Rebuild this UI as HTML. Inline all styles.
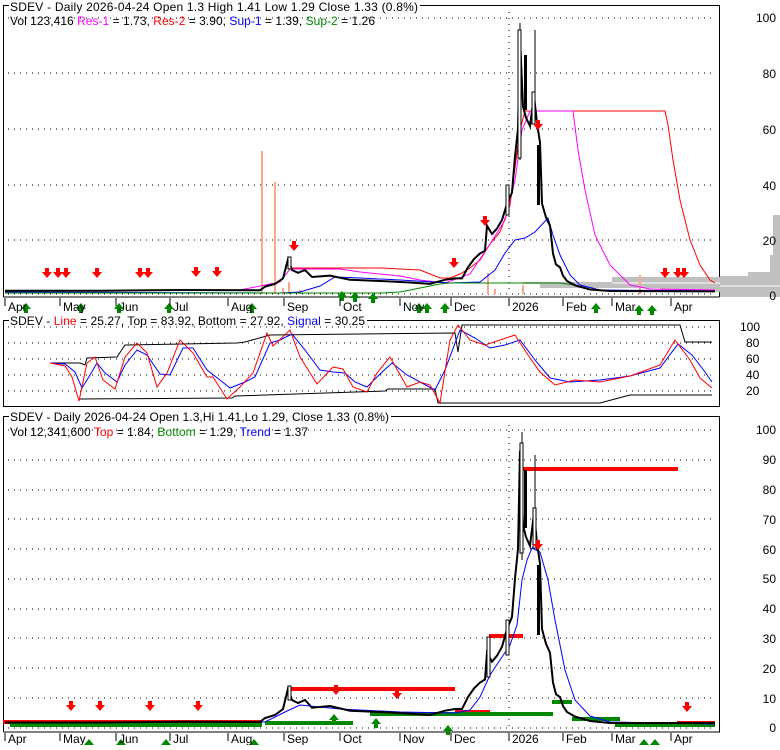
<!DOCTYPE html>
<html><head><meta charset="utf-8"><style>
body{margin:0;background:#fff;width:780px;height:745px;overflow:hidden}
svg text{font-family:"Liberation Sans",sans-serif;font-size:12px}
</style></head><body>
<svg width="780" height="745" viewBox="0 0 780 745" xmlns="http://www.w3.org/2000/svg">
<defs>
<g id="dn"><path d="M-2,-8h4v4h3l-5,6l-5,-6h3z" fill="#f00"/></g>
<g id="up"><path d="M-2,8h4v-4h3l-5,-6l-5,6h3z" fill="#080"/></g>
</defs>
<!-- PANEL 1 -->
<g fill="none" stroke="#000" stroke-width="1">
<path d="M3.5,297V5.5H719.5V297"/>
<path d="M3.5,297H719.5"/>
</g>
<g stroke="#000" stroke-dasharray="1 5">
<line x1="8" y1="18" x2="715" y2="18"/><line x1="8" y1="73" x2="715" y2="73"/><line x1="8" y1="129" x2="715" y2="129"/><line x1="8" y1="185" x2="715" y2="185"/><line x1="8" y1="240" x2="715" y2="240"/><line x1="8" y1="294" x2="715" y2="294"/>
<line x1="509" y1="12" x2="509" y2="294"/>
</g>
<!-- volume profile -->
<path d="M612,277H720V276H748V272H770V255H773V215H780V297H720V292H660V288H540V284H523V282H612Z" fill="#c0c0c0"/>
<path d="M612,283H720M720,286H780" stroke="#fff" stroke-width="1"/>
<!-- volume bars -->
<g stroke="#f9a98a" stroke-width="2">
<line x1="262" y1="294" x2="262" y2="151"/><line x1="275" y1="294" x2="275" y2="182"/><line x1="289" y1="294" x2="289" y2="282"/><line x1="283" y1="294" x2="283" y2="288"/><line x1="488" y1="294" x2="488" y2="273"/><line x1="523" y1="294" x2="523" y2="285"/><line x1="640" y1="294" x2="640" y2="275"/><line x1="300" y1="294" x2="300" y2="290"/><line x1="495" y1="294" x2="495" y2="289"/>
</g>
<!-- indicator lines -->
<polyline fill="none" stroke="#f00" points="290,268 300,268 380,268 420,270 440,278 450,278 460,274 470,268 480,260 490,244 500,232 510,205 520,130 525,111 665,111 668,125 673,160 680,200 690,240 700,265 710,280 715,283"/>
<polyline fill="none" stroke="#f0f" points="5,291 240,290 280,282 290,269 340,269 360,272 400,276 420,280 445,283 470,274 490,244 505,220 515,180 522,130 530,111 573,111 578,150 585,190 595,235 610,265 630,285 650,289 715,290"/>
<polyline fill="none" stroke="#00f" points="5,292 280,293 300,292 320,286 335,277 360,278 400,280 450,283 480,282 495,270 505,253 515,240 525,238 535,232 548,218 553,235 560,255 570,275 580,285 600,290 715,291"/>
<polyline fill="none" stroke="#080" points="5,293 380,293 400,292 420,288 440,284 450,283 560,283 575,285"/>
<!-- price -->
<polyline fill="none" stroke="#000" stroke-width="2" points="5,290.8 100,290.8 180,290 260,290.3 265,286.7 275,283.9 283,278.4 288,259 292,270 298,272.8 305,270 312,277 330,275.6 350,279.8 380,281 410,282.5 430,283.9 445,279.8 455,278.4 462,278.4 468,267.3 474,259 480,253.5 485,250.7 487,225.7 492,234 497,228.5 502,220 507,203.6 512,192.5 515,156.5 518,128.8 520,37.4 523,106.6 526,117.7 530,126 534,95.6 537,123 540,142.6 542,203.6 546,217.4 550,225.7 553,253.5 556,264.5 560,267.3 563,275.6 567,281 575,285.3 590,289.5 610,291 715,291.4"/>
<g stroke="#000" fill="#fff">
<line x1="520" y1="23" x2="520" y2="160"/><line x1="535" y1="30" x2="535" y2="125"/>
<rect x="518" y="30" width="3" height="128"/><rect x="532" y="92" width="3" height="32"/><rect x="288" y="257" width="3" height="12"/><rect x="506" y="185" width="3" height="30"/>
</g>
<rect x="524" y="55" width="3" height="55" fill="#000"/><rect x="537" y="145" width="3" height="60" fill="#000"/>
<!-- arrows panel1 -->
<g>
<use href="#dn" x="47" y="276"/><use href="#dn" x="58" y="276"/><use href="#dn" x="66" y="276"/><use href="#dn" x="97" y="276"/><use href="#dn" x="140" y="276"/><use href="#dn" x="148" y="276"/><use href="#dn" x="196" y="275"/><use href="#dn" x="217" y="275"/><use href="#dn" x="294" y="249"/><use href="#dn" x="454" y="266"/><use href="#dn" x="485" y="224"/><use href="#dn" x="538" y="128"/><use href="#dn" x="665" y="276"/><use href="#dn" x="678" y="276"/><use href="#dn" x="684" y="276"/>
<use href="#up" x="26" y="305"/><use href="#up" x="81" y="305"/><use href="#up" x="119" y="305"/><use href="#up" x="169" y="305"/><use href="#up" x="252" y="305"/><use href="#up" x="342" y="293"/><use href="#up" x="355" y="294"/><use href="#up" x="373" y="295"/><use href="#up" x="419" y="305"/><use href="#up" x="427" y="305"/><use href="#up" x="445" y="305"/><use href="#up" x="596" y="305"/><use href="#up" x="639" y="307"/><use href="#up" x="652" y="307"/>
</g>
<g stroke="#000"><path d="M5,298v8M60,298v8M116,298v8M170,298v8M228,298v8M284,298v8M340,298v8M400,298v8M451,298v8M509,298v8M563,298v8M612,298v8M671,298v8"/></g>
<g fill="#000"><text x="8" y="311">Apr</text><text x="63" y="311">May</text><text x="119" y="311">Jun</text><text x="173" y="311">Jul</text><text x="231" y="311">Aug</text><text x="287" y="311">Sep</text><text x="343" y="311">Oct</text><text x="403" y="311">Nov</text><text x="454" y="311">Dec</text><text x="512" y="311">2026</text><text x="566" y="311">Feb</text><text x="615" y="311">Mar</text><text x="674" y="311">Apr</text></g>
<g fill="#000" text-anchor="end"><text x="776" y="22">100</text><text x="776" y="78">80</text><text x="776" y="134">60</text><text x="776" y="190">40</text><text x="776" y="245">20</text><text x="776" y="300">0</text></g>
<rect x="9" y="0" width="411" height="13" fill="#fff"/>
<text x="10" y="11" textLength="408" lengthAdjust="spacing">SDEV - Daily 2026-04-24 Open 1.3  High 1.41  Low 1.29  Close 1.33 (0.8%)</text>
<text x="10" y="25" textLength="365" lengthAdjust="spacing">Vol 123,416 <tspan fill="#f0f">Res-1</tspan> = 1.73, <tspan fill="#f00">Res-2</tspan> = 3.90, <tspan fill="#00f">Sup-1</tspan> = 1.39, <tspan fill="#080">Sup-2</tspan> = 1.26</text>

<!-- PANEL 2 -->
<rect x="3.5" y="320.5" width="716" height="86" fill="none" stroke="#000"/>
<g stroke="#000" stroke-dasharray="1 5"><line x1="8" y1="327" x2="715" y2="327"/><line x1="8" y1="343" x2="715" y2="343"/><line x1="8" y1="359" x2="715" y2="359"/><line x1="8" y1="375" x2="715" y2="375"/><line x1="8" y1="391" x2="715" y2="391"/></g>
<polyline fill="none" stroke="#000" points="50,363 80,363 85,365 87,358 117,357 125,345 237,343 245,342 270,335 455,333 458,352 462,325 680,325 685,342 712,342"/>
<polyline fill="none" stroke="#000" points="80,399 232,398 235,396 385,391 388,389 435,389 438,403 600,403 630,395 712,395"/>
<polyline fill="none" stroke="#00f" points="50,363 65,364 75,372 82,388 90,375 97,363 105,373 117,382 125,365 137,350 147,355 160,374 170,375 183,348 193,348 207,370 220,380 230,388 245,382 255,377 270,343 280,340 292,334 305,350 320,370 333,372 345,373 355,382 367,387 380,374 392,363 407,375 420,382 435,390 445,370 460,330 475,338 490,348 505,345 520,340 535,360 550,378 570,382 600,380 630,376 660,368 678,344 692,355 705,372 712,382"/>
<polyline fill="none" stroke="#f00" points="50,363 65,366 72,377 79,401 87,363 95,357 103,380 115,389 125,357 137,343 147,353 157,387 167,373 180,340 193,353 207,377 213,377 227,399 240,387 253,373 267,333 273,346 290,330 300,357 317,384 333,367 343,369 353,387 367,392 377,373 390,357 407,387 420,382 430,385 440,403 450,340 458,325 470,340 485,345 500,340 515,335 528,355 540,372 555,385 575,380 600,382 630,376 660,365 675,340 690,360 700,378 712,388"/>
<g fill="#000"><text x="740" y="331">100</text><text x="746" y="347">80</text><text x="746" y="363">60</text><text x="746" y="379">40</text><text x="746" y="395">20</text></g>
<rect x="9" y="313" width="358" height="13" fill="#fff"/>
<text x="10" y="325" textLength="355" lengthAdjust="spacing">SDEV - <tspan fill="#f00">Line</tspan> = 25.27, Top = 83.92, Bottom = 27.92, <tspan fill="#00f">Signal</tspan> = 30.25</text>

<!-- PANEL 3 -->
<g fill="none" stroke="#000"><path d="M3.5,732V416.5H719.5V732H3.5"/></g>
<g stroke="#000" stroke-dasharray="1 5">
<line x1="8" y1="430" x2="715" y2="430"/><line x1="8" y1="460" x2="715" y2="460"/><line x1="8" y1="490" x2="715" y2="490"/><line x1="8" y1="519" x2="715" y2="519"/><line x1="8" y1="549" x2="715" y2="549"/><line x1="8" y1="579" x2="715" y2="579"/><line x1="8" y1="609" x2="715" y2="609"/><line x1="8" y1="638" x2="715" y2="638"/><line x1="8" y1="668" x2="715" y2="668"/><line x1="8" y1="698" x2="715" y2="698"/><line x1="8" y1="728" x2="715" y2="728"/>
<line x1="509" y1="425" x2="509" y2="728"/>
</g>
<g stroke-width="4">
<path d="M3,722H262M290,689H455M455,712H490M489,636H523M523,469H678M677,723H715" stroke="#f00"/>
<path d="M10,725H262M265,723H353M370,714H553M552,702H572M572,719H620M615,725H715" stroke="#080"/>
</g>
<polyline fill="none" stroke="#00f" points="5,723 265,722 285,712 300,705 340,709 400,712 455,713 470,710 480,697 490,675 500,660 510,645 517,625 522,580 527,560 532,548 540,552 548,580 555,620 565,670 575,700 590,716 610,722 715,724"/>
<polyline fill="none" stroke="#000" stroke-width="2" points="5,722.5 100,722.5 180,721.7 260,722 265,718 275,715 283,709 288,688.4 292,700 298,703 305,700 312,707.7 330,706 350,710.7 380,712 410,713.6 430,715 445,710.7 455,709 462,709 468,697 474,688.4 480,682.5 485,679.5 487,652.8 492,661.7 497,655.7 502,646.8 507,629 512,617 515,578.5 518,548.8 520,450.8 523,525 526,537 530,545.8 534,513 537,543 540,563.6 542,629 546,643.8 550,652.8 553,682.5 556,694.3 560,697 563,706 567,712 575,716.6 590,721 610,723 715,723"/>
<g stroke="#000" fill="#fff">
<line x1="522" y1="432" x2="522" y2="560"/><line x1="535" y1="455" x2="535" y2="545"/>
<rect x="520" y="443" width="3" height="110"/><rect x="533" y="508" width="3" height="40"/><rect x="288" y="686" width="3" height="14"/><rect x="487" y="637" width="3" height="40"/><rect x="506" y="620" width="3" height="35"/>
</g>
<rect x="524" y="470" width="3" height="58" fill="#000"/><rect x="537" y="565" width="3" height="70" fill="#000"/>
<g>
<use href="#dn" x="71" y="709"/><use href="#dn" x="100" y="709"/><use href="#dn" x="150" y="709"/><use href="#dn" x="198" y="709"/><use href="#dn" x="336" y="693"/><use href="#dn" x="397" y="697"/><use href="#dn" x="538" y="548"/><use href="#dn" x="687" y="710"/>
<use href="#up" x="89" y="741"/><use href="#up" x="121" y="741"/><use href="#up" x="166" y="741"/><use href="#up" x="254" y="741"/><use href="#up" x="334" y="716"/><use href="#up" x="376" y="720"/><use href="#up" x="448" y="727"/><use href="#up" x="644" y="741"/><use href="#up" x="655" y="741"/>
</g>
<g stroke="#000"><path d="M5,733v8M60,733v8M116,733v8M170,733v8M228,733v8M284,733v8M340,733v8M400,733v8M451,733v8M509,733v8M563,733v8M612,733v8M671,733v8"/></g>
<g fill="#000"><text x="8" y="743">Apr</text><text x="63" y="743">May</text><text x="119" y="743">Jun</text><text x="173" y="743">Jul</text><text x="231" y="743">Aug</text><text x="287" y="743">Sep</text><text x="343" y="743">Oct</text><text x="403" y="743">Nov</text><text x="454" y="743">Dec</text><text x="512" y="743">2026</text><text x="566" y="743">Feb</text><text x="615" y="743">Mar</text><text x="674" y="743">Apr</text></g>
<g fill="#000" text-anchor="end"><text x="776" y="434">100</text><text x="776" y="464">90</text><text x="776" y="494">80</text><text x="776" y="524">70</text><text x="776" y="554">60</text><text x="776" y="583">50</text><text x="776" y="613">40</text><text x="776" y="643">30</text><text x="776" y="673">20</text><text x="776" y="703">10</text><text x="776" y="732">0</text></g>
<rect x="9" y="410" width="382" height="13" fill="#fff"/>
<text x="10" y="421" textLength="379" lengthAdjust="spacing">SDEV - Daily 2026-04-24 Open 1.3,Hi 1.41,Lo 1.29, Close 1.33 (0.8%)</text>
<text x="10" y="436" textLength="298" lengthAdjust="spacing">Vol 12,341,600 <tspan fill="#f00">Top</tspan> = 1.84, <tspan fill="#080">Bottom</tspan> = 1.29, <tspan fill="#00f">Trend</tspan> = 1.37</text>
</svg>
</body></html>
